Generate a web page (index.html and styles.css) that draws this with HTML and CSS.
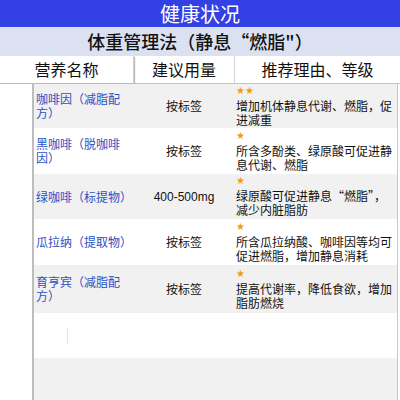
FILE: index.html
```html
<!DOCTYPE html>
<html>
<head>
<meta charset="utf-8">
<link rel="stylesheet" href="styles.css">
</head>
<body>
<div class="page">
  <div class="title">健康状况</div>
  <div class="subtitle">体重管理法（静息“燃脂"）</div>
  <div class="head">
    <div class="hcell first">营养名称</div>
    <div class="hcell second">建议用量</div>
    <div class="hcell third">推荐理由、等级</div>
  </div>
  <div class="body">
    <div class="gutter"></div>
    <div class="rows">
      <div class="row gray h44">
        <div class="name">咖啡因（减脂配方）</div>
        <div class="dose">按标签</div>
        <div class="reason"><div class="stars">★★</div><div class="text">增加机体静息代谢、燃脂，促进减重</div></div>
      </div>
      <div class="row h46">
        <div class="name">黑咖啡（脱咖啡因）</div>
        <div class="dose">按标签</div>
        <div class="reason"><div class="stars">★</div><div class="text">所含多酚类、绿原酸可促进静息代谢、燃脂</div></div>
      </div>
      <div class="row gray h45">
        <div class="name">绿咖啡（标提物）</div>
        <div class="dose latin">400-500mg</div>
        <div class="reason"><div class="stars">★</div><div class="text">绿原酸可促进静息“燃脂”，减少内脏脂肪</div></div>
      </div>
      <div class="row h46">
        <div class="name">瓜拉纳（提取物）</div>
        <div class="dose">按标签</div>
        <div class="reason"><div class="stars">★</div><div class="text">所含瓜拉纳酸、咖啡因等均可促进燃脂，增加静息消耗</div></div>
      </div>
      <div class="row gray h48">
        <div class="name">育亨宾（减脂配方）</div>
        <div class="dose">按标签</div>
        <div class="reason"><div class="stars">★</div><div class="text">提高代谢率，降低食欲，增加脂肪燃烧</div></div>
      </div>
      <div class="row h45 empty">
        <div class="caret"></div>
      </div>
      <div class="row gray fill"></div>
    </div>
  </div>
</div>
</body>
</html>
```
FILE: styles.css
```css
html, body {
  margin: 0;
  padding: 0;
  background: #ffffff;
}
.page {
  width: 400px;
  height: 400px;
  overflow: hidden;
  display: flex;
  flex-direction: column;
  font-family: "Noto Sans CJK SC", "Liberation Sans", sans-serif;
  color: #222;
}
.title {
  height: 27px;
  background: #3340e4;
  color: #fff;
  font-size: 20px;
  line-height: 27px;
  text-align: center;
}
.subtitle {
  height: 29px;
  background: #dce1f2;
  color: #111;
  font-size: 18px;
  line-height: 29px;
  text-align: center;
  font-weight: 500;
}
.head {
  height: 27px;
  display: grid;
  grid-template-columns: 134px 100px 1fr;
  border-bottom: 1px solid #c4c4c4;
  box-sizing: content-box;
}
.hcell {
  font-size: 16px;
  line-height: 27px;
  text-align: center;
  color: #111;
}
.hcell.first {
  border-right: 1px solid #cfcfcf;
  box-shadow: 1px 1px 1px #bbb;
}
.hcell.third {
  border-left: 1px solid #d6d6d6;
}
.body {
  flex: 1;
  display: flex;
}
.gutter {
  width: 32px;
  border-right: 2px solid #bdbdbd;
  background: #fff;
}
.rows {
  width: 363px;
  border-right: 1px solid #c8c8c8;
  display: flex;
  flex-direction: column;
}
.row {
  display: grid;
  grid-template-columns: 100px 100px 1fr;
  align-items: center;
  font-size: 12px;
  line-height: 14px;
  background: #fff;
}
.row.gray { background: #f1f1f1; }
.h44 { height: 44px; }
.h45 { height: 45px; }
.h46 { height: 46px; }
.h48 { height: 48px; }
.row.fill { flex: 1; }
.name {
  color: #2c4fc4;
  padding-left: 2px;
}
.dose {
  text-align: center;
  color: #111;
}
.dose.latin {
  font-family: "Liberation Sans", sans-serif;
}
.reason {
  padding-left: 2px;
  padding-right: 4px;
  color: #111;
  display: flex;
  flex-direction: column;
  gap: 3px;
}
.stars {
  color: #f29c0c;
  font-family: "DejaVu Sans", sans-serif;
  font-size: 10px;
  line-height: 10px;
  height: 10px;
}
.row.empty {
  position: relative;
}
.caret {
  position: absolute;
  left: 33px;
  top: 15px;
  width: 1px;
  height: 16px;
  background: #e4e4e4;
}
```
